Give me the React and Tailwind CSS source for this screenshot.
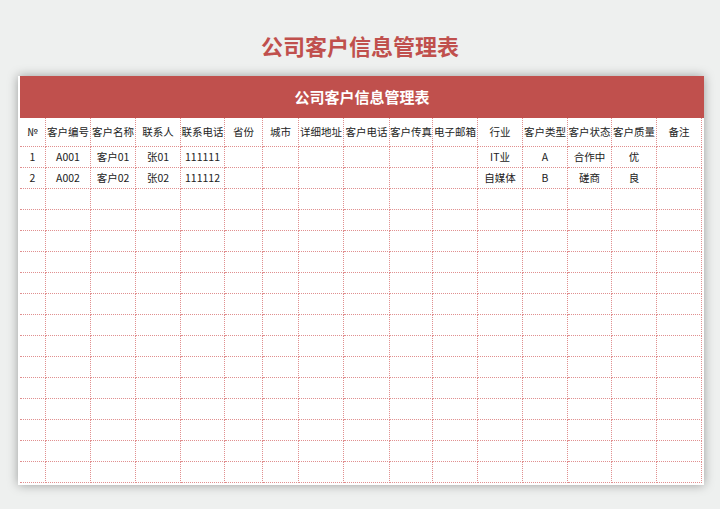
export default function App() {
  const heads = ["№","客户编号","客户名称","联系人","联系电话","省份","城市","详细地址","客户电话","客户传真","电子邮箱","行业","客户类型","客户状态","客户质量","备注"];
  const data = [
    ["1","A001","客户01","张01","111111","","","","","","","IT业","A","合作中","优",""],
    ["2","A002","客户02","张02","111112","","","","","","","自媒体","B","磋商","良",""],
  ];
  const rows = [...data];
  while (rows.length < 16) rows.push(Array(16).fill(""));
  const cell = "border-r border-b border-dotted border-[#e08f8f] flex items-center justify-center whitespace-nowrap overflow-hidden";
  return (
    <div className="w-[720px] h-[509px] bg-[#eef0ef] overflow-hidden" style={{fontFamily:'"Noto Sans CJK SC", "Noto Sans", sans-serif'}}>
      <div className="h-[76px] flex items-center justify-center pt-[14px]">
        <div className="text-[22px] font-bold text-[#c0504d]">公司客户信息管理表</div>
      </div>
      <div className="ml-[18px] w-[686px] h-[409px] bg-white pl-[2px] shadow-[0_0_10px_rgba(0,0,0,0.35)] overflow-hidden">
        <div className="h-[42px] bg-[#c0504d] flex items-center justify-center text-white font-bold text-[15px]">公司客户信息管理表</div>
        <div className="grid grid-cols-[26px_45px_45px_45px_44px_38px_36px_45px_46px_43px_45px_45px_45px_44px_45px_45px] grid-rows-[29px] auto-rows-[21px] text-[10.5px] text-[#222]">
          {heads.map((h, i) => (
            <div key={"h"+i} className={cell}>{h}</div>
          ))}
          {rows.map((r, ri) => r.map((c, ci) => (
            <div key={ri+"-"+ci} className={cell}>{c}</div>
          )))}
        </div>
      </div>
    </div>
  );
}
